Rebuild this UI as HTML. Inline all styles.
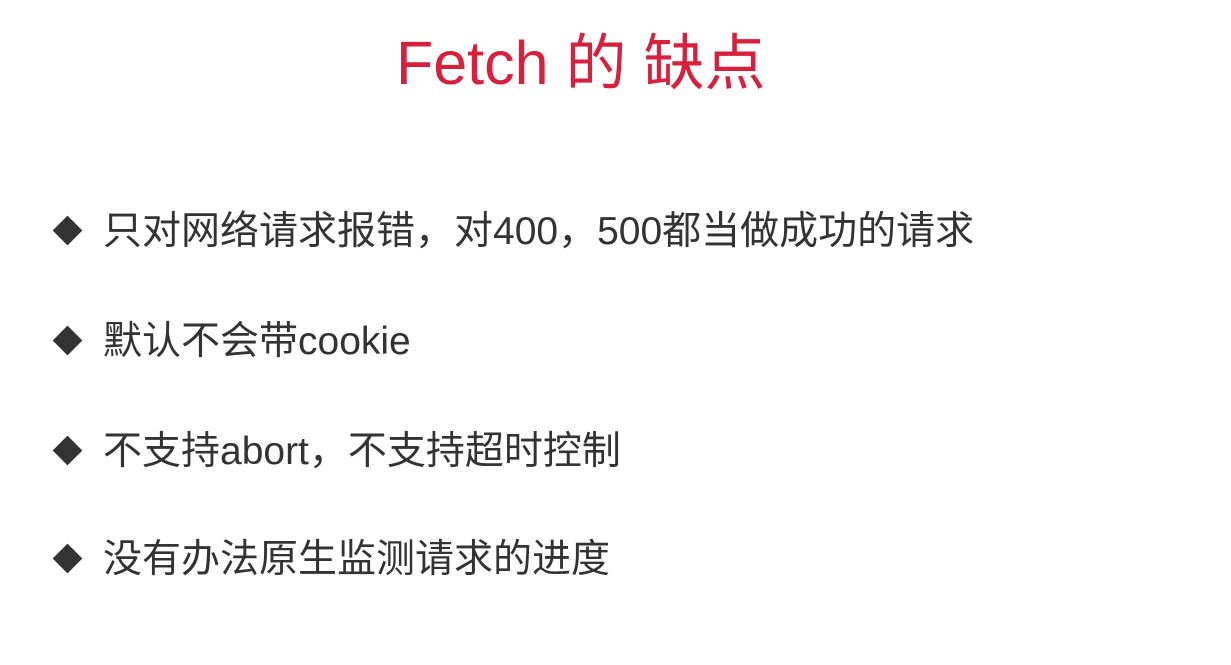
<!DOCTYPE html>
<html><head><meta charset="utf-8"><style>
body{margin:0;width:1231px;height:665px;background:#fff;overflow:hidden;font-family:"Liberation Sans","Noto Sans CJK SC",sans-serif;}
.t{position:absolute;left:396px;top:28px;font-size:61px;color:#d8203c;white-space:nowrap;line-height:70px;}
.l{position:absolute;left:103px;font-size:39px;color:#333;white-space:nowrap;line-height:44px;}
.d{position:absolute;left:57px;width:21px;height:21px;background:#333;transform:rotate(45deg);}
</style></head><body>
<div class="t">Fetch 的 缺点</div>
<div class="d" style="top:220px"></div><div class="l" style="top:210px">只对网络请求报错，对400，500都当做成功的请求</div>
<div class="d" style="top:330px"></div><div class="l" style="top:320px">默认不会带cookie</div>
<div class="d" style="top:440px"></div><div class="l" style="top:430px">不支持abort，不支持超时控制</div>
<div class="d" style="top:548px"></div><div class="l" style="top:538px">没有办法原生监测请求的进度</div>
</body></html>
